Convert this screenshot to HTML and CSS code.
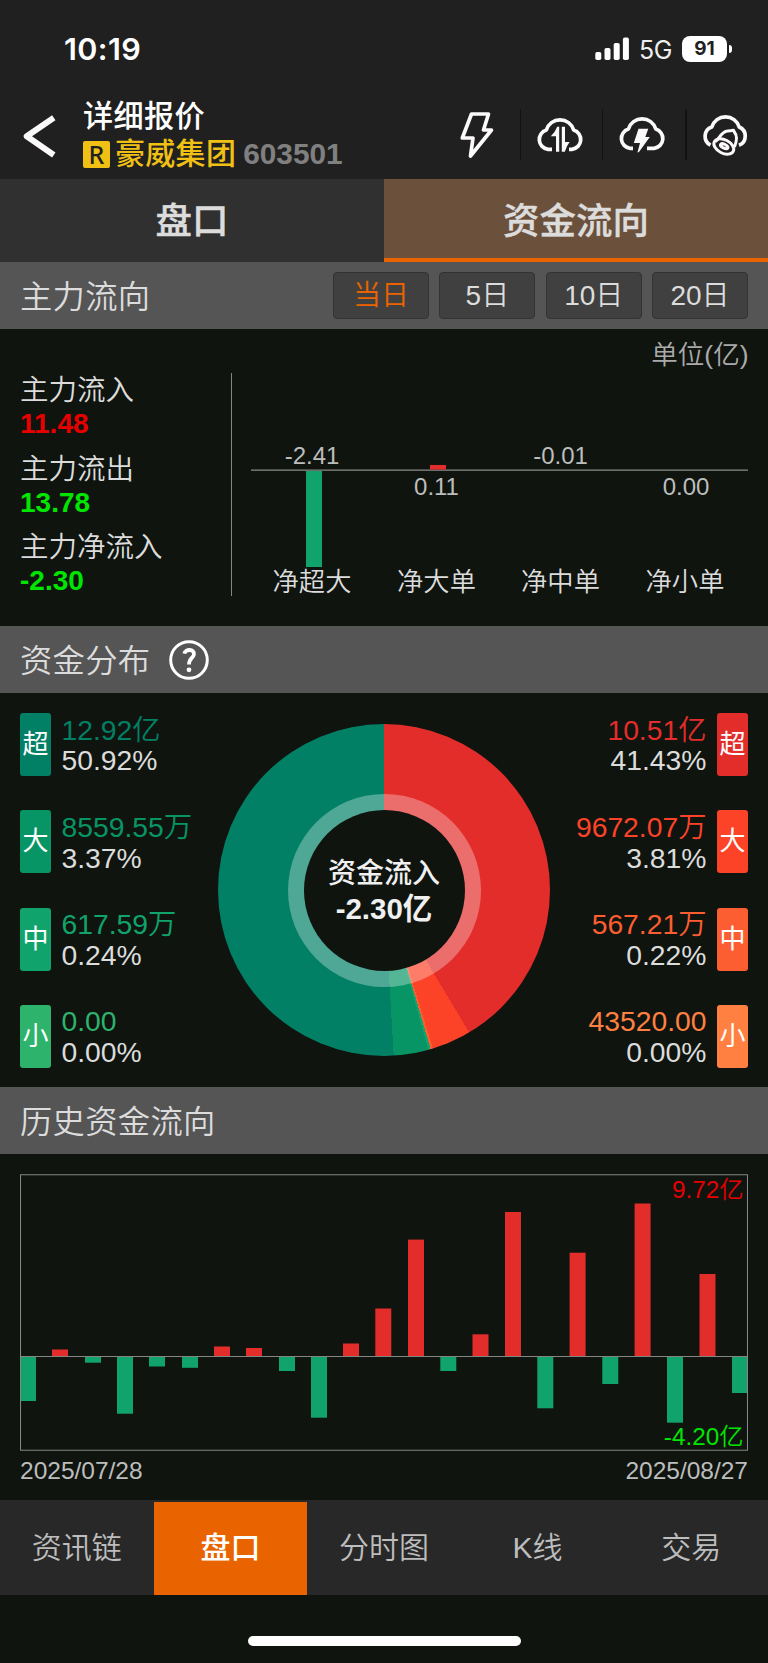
FILE: index.html
```html
<!DOCTYPE html>
<html lang="zh-CN">
<head>
<meta charset="utf-8">
<title>详细报价</title>
<link rel="stylesheet" href="styles.css">
</head>
<body>
<div class="status">
  <span class="clock">10:19</span>
  <svg class="signal" viewBox="0 0 35 24" width="35" height="24" fill="#fff"><rect x="0.3" y="15" width="6" height="8" rx="1.8"/><rect x="9.5" y="11" width="6" height="12" rx="1.8"/><rect x="18.7" y="6" width="6" height="17" rx="1.8"/><rect x="27.9" y="0.6" width="6" height="22.4" rx="1.8"/></svg>
  <span class="net">5G</span>
  <span class="battery">91</span>
  <span class="nub"></span>
</div>
<header class="header">
  <svg class="back" viewBox="20 112 36 48" width="36" height="48" fill="none" stroke="#fbf9fa" stroke-width="6" stroke-linecap="butt" stroke-linejoin="round"><path d="M53.8 117.800 26.7 136.3 53.8 155"/></svg>
  <div class="titles">
    <div class="title">详细报价</div>
    <div class="stock"><span class="margin-tag">R</span><span class="name">豪威集团</span><span class="code">603501</span></div>
  </div>
  <div class="tools">
    <svg class="tool" viewBox="438.5 108 82.5 51"><path d="M473 113H490L485 129H493L472 155 474.5 137H463.8Z"/></svg>
    <svg class="tool" viewBox="521 108 82.5 51"><path d="M553 148.300H549A9.900 9.900 0 0 1 547.300 129 14.300 14.300 0 0 1 574.700 129 9.900 9.900 0 0 1 573 148.300H570"/><path class="solid" d="M560.200 125.800V150.800H557V135.200H551.800Q556 131.500 558.200 125.800ZM562.800 125.800H566V141H570.600Q567.500 145 565.800 150.800H562.800Z"/></svg>
    <svg class="tool" viewBox="603.5 108 82.5 51"><path d="M634.500 147.300H631.600A9.900 9.900 0 0 1 629.900 128 14.300 14.300 0 0 1 657.300 128 9.900 9.900 0 0 1 655.600 147.300H648.500"/><path class="solid" d="M640 127.800H649.800L646.800 136H651.300L640.300 151.200H639L641.500 142H635.300Z"/></svg>
    <svg class="tool" viewBox="686 108 82.500 51"><path d="M711.500 144.200A9.900 9.900 0 0 1 712.800 126 14.300 14.300 0 0 1 740.200 126 9.900 9.900 0 0 1 740 144.300"/><ellipse class="fine" cx="724.800" cy="145.500" rx="10.600" ry="6.700" transform="rotate(27 724.800 145.500)"/><ellipse class="fine" cx="725.200" cy="145.200" rx="4" ry="1.900" transform="rotate(27 725.200 145.200)"/><path class="fine" d="M716.500 140.500C720.500 138 722 130.500 728.500 129.900 731 129.500 732.500 129.800 734.500 129.200L735.500 131.300C739 135.500 737.500 141 735.500 146"/></svg>
  </div>
</header>
<nav class="tabs"><div class="tab">盘口</div><div class="tab tab-on">资金流向</div></nav>

<div class="bar bar-first"><h2>主力流向</h2>
  <div class="periods"><button class="on">当日</button><button>5日</button><button>10日</button><button>20日</button></div>
</div>
<section class="flow">
  <div class="totals">
    <div class="total"><span>主力流入</span><b class="up">11.48</b></div>
    <div class="total"><span>主力流出</span><b class="down">13.78</b></div>
    <div class="total"><span>主力净流入</span><b class="down">-2.30</b></div>
  </div>
  <svg class="flow-chart" viewBox="232 329 536 296" width="536" height="296">
    <text class="unit" x="748.500" y="364" text-anchor="end">单位(亿)</text>
    <rect x="251" y="469.500" width="497" height="1.300" fill="#858585"/>
    <rect x="306" y="471" width="16" height="96" fill="#10a36c"/>
    <rect x="430" y="465" width="16" height="4.600" fill="#e32d2a"/>
    <g class="num" text-anchor="middle"><text x="312" y="463.500">-2.41</text><text x="436.500" y="494.500">0.11</text><text x="560.500" y="463.500">-0.01</text><text x="686" y="494.500">0.00</text></g>
    <g class="kind" text-anchor="middle"><text x="312" y="591">净超大</text><text x="436.500" y="591">净大单</text><text x="560.500" y="591">净中单</text><text x="685" y="591">净小单</text></g>
  </svg>
</section>

<div class="bar"><h2>资金分布</h2>
  <svg class="help" viewBox="0 0 40 40" width="40" height="40" fill="none" stroke="#fff"><circle cx="20" cy="20" r="18.300" stroke-width="3"/><path d="M15.300 13.700C16.300 8.500 25.600 8.800 24.900 14.500 24.400 18.300 20 18 20 24.500" stroke-width="3.800"/><circle cx="20" cy="29.800" r="2.400" fill="#fff" stroke="none"/></svg>
</div>
<section class="dist">
  <div class="side">
    <div class="item g1"><i>超</i><p><span>12.92亿</span><br>50.92%</p></div>
    <div class="item g2"><i>大</i><p><span>8559.55万</span><br>3.37%</p></div>
    <div class="item g3"><i>中</i><p><span>617.59万</span><br>0.24%</p></div>
    <div class="item g4"><i>小</i><p><span>0.00</span><br>0.00%</p></div>
  </div>
  <div class="donut"><div class="halo"><div class="hole"><span>资金流入</span><b>-2.30亿</b></div></div></div>
  <div class="side right">
    <div class="item r1"><i>超</i><p><span>10.51亿</span><br>41.43%</p></div>
    <div class="item r2"><i>大</i><p><span>9672.07万</span><br>3.81%</p></div>
    <div class="item r3"><i>中</i><p><span>567.21万</span><br>0.22%</p></div>
    <div class="item r4"><i>小</i><p><span>43520.00</span><br>0.00%</p></div>
  </div>
</section>

<div class="bar"><h2>历史资金流向</h2></div>
<section class="history">
  <svg viewBox="20 1174 728 277" width="728" height="277">
    <g fill="#e32d2a">
      <rect x="52" y="1349.500" width="16" height="7"/><rect x="214" y="1346.500" width="16" height="10"/><rect x="246" y="1348" width="16" height="8.500"/><rect x="343" y="1343.500" width="16" height="13"/><rect x="375.300" y="1308.500" width="16" height="48"/><rect x="408" y="1239.600" width="16" height="117"/><rect x="472.500" y="1334.300" width="16" height="22"/><rect x="505" y="1212" width="16" height="144.500"/><rect x="569.600" y="1252.700" width="16" height="104"/><rect x="634.600" y="1203.500" width="16" height="153"/><rect x="699.500" y="1274" width="16" height="82.500"/>
    </g>
    <g fill="#10a36c">
      <rect x="20" y="1357" width="16" height="44"/><rect x="85" y="1357" width="16" height="5.700"/><rect x="117" y="1357" width="16" height="56.700"/><rect x="149" y="1357" width="16" height="9.500"/><rect x="182" y="1357" width="16" height="10.800"/><rect x="279" y="1357" width="16" height="14"/><rect x="311" y="1357" width="16" height="60.700"/><rect x="440.300" y="1357" width="16" height="14"/><rect x="537.300" y="1357" width="16" height="51.300"/><rect x="602.300" y="1357" width="16" height="27"/><rect x="667" y="1357" width="16" height="65.700"/><rect x="732" y="1357" width="16" height="36"/>
    </g>
    <path d="M20 1356.500H748M20.500 1174.700H747.500V1450.300H20.500Z" fill="none" stroke="#858585" stroke-width="1.100"/>
    <text x="743.500" y="1197.500" text-anchor="end" fill="#e60000">9.72亿</text>
    <text x="743.500" y="1445" text-anchor="end" fill="#00e600">-4.20亿</text>
  </svg>
  <div class="dates"><span>2025/07/28</span><span>2025/08/27</span></div>
</section>
<nav class="bottom"><a>资讯链</a><a class="active">盘口</a><a>分时图</a><a>K线</a><a>交易</a></nav>
<div class="home"><span></span></div>
</body>
</html>
```
FILE: styles.css
```css
* { box-sizing: border-box; }
body { margin: 0; width: 768px; height: 1663px; overflow: hidden; background: #0f140f; color: #dcdcdc; font-family: "Liberation Sans", "Noto Sans CJK SC", sans-serif; }
svg { display: block; flex: none; }
.status { height: 98px; background: #202020; color: #fff; display: flex; align-items: flex-start; font-family: Inter, sans-serif; }
.clock { width: 530px; padding: 31px 0 0 64px; font-size: 30.500px; line-height: 36px; font-weight: 600; letter-spacing: .4px; }
.signal { margin: 37px 0 0 65px; }
.net { width: 43px; margin-left: 9px; padding-top: 35px; font-size: 25px; line-height: 30px; letter-spacing: -.5px; color: #eee; }
.battery { width: 45px; height: 26px; margin-top: 36px; border-radius: 8px; background: #fff; color: #202020; font-size: 19px; line-height: 26px; font-weight: 700; text-align: center; }
.nub { width: 3px; height: 8px; margin: 45px 0 0 2px; border-radius: 0 4px 4px 0; background: #fff; }
.header { height: 81px; background: #202020; display: flex; align-items: flex-start; }
.back { margin: 14px 0 0 20px; }
.titles { width: 354px; margin-left: 27px; }
.title { height: 37px; color: #fff; font-size: 30.200px; line-height: 37px; font-weight: 500; letter-spacing: .3px; }
.stock { display: flex; height: 38px; align-items: center; }
.margin-tag { width: 27px; height: 27px; border-radius: 2px; background: #f0c114; color: #202020; font: 500 25px/26px "Noto Sans", sans-serif; text-align: center; }
.name { margin-left: 5px; color: #f0c114; font-size: 30px; line-height: 38px; font-weight: 500; letter-spacing: .3px; }
.code { margin-left: 7px; color: #808080; font-size: 29.800px; line-height: 36px; font-weight: 700; }
.tools { display: flex; margin-top: 10.500px; }
.tool { width: 82.500px; height: 51px; fill: none; stroke: #fbf9fa; stroke-width: 3.700; stroke-linejoin: round; }
.tool + .tool { background: linear-gradient(90deg, #121212 1.500px, transparent 1.500px); }
.tool .solid { fill: #fbf9fa; stroke: none; }
.tool .fine { stroke-width: 3; }
.tabs { display: flex; height: 83px; }
.tab { width: 384px; padding-top: 2px; background: #303030; font-size: 36.500px; line-height: 82px; text-align: center; font-weight: 500; -webkit-text-stroke: .4px #dcdcdc; }
.tab-on { background: #6b503b; border-bottom: 4px solid #e96400; }
.bar { height: 67px; padding: 0 20px; background: #555; display: flex; align-items: center; }
.bar h2 { margin: 2px 0 0; color: #dcdcdc; font-size: 32.300px; line-height: 40px; font-weight: 350; letter-spacing: .3px; }
.periods { display: flex; gap: 10.300px; margin-left: auto; }
.periods button { width: 96px; height: 47px; padding: 0; border: 1px solid #333; border-radius: 4px; background: #404040; color: #dcdcdc; font: 350 28px/46px "Liberation Sans", "Noto Sans CJK SC", sans-serif; }
.periods .on { color: #e96400; }
.flow { height: 297px; display: flex; }
.totals { width: 232px; height: 223px; margin-top: 44px; padding-left: 20px; border-right: 1.500px solid #858585; }
.total { height: 78.500px; color: #dcdcdc; font-size: 28.500px; font-weight: 350; }
.total span { display: block; height: 34px; line-height: 34px; }
.total b { display: block; font-size: 28px; line-height: 34px; font-weight: 700; }
.up { color: #e60000; }
.down { color: #00e600; }
.unit { font-size: 26.500px; fill: #aaa; font-weight: 350; }
.num { font-size: 24px; fill: #bdbdbd; }
.kind { font-size: 26.300px; fill: #dcdcdc; font-weight: 350; }
.help { margin-left: 19px; }
.dist { height: 394px; padding: 20px 20px 0; display: flex; }
.side { width: 198px; display: flex; flex-direction: column; gap: 34.300px; }
.item { display: flex; height: 63px; gap: 10.500px; font-size: 28.300px; }
.item i { flex: none; width: 31px; height: 63px; border-radius: 3px; color: #fff; font-size: 26px; line-height: 63px; font-style: normal; text-align: center; }
.item p { margin: 1.500px 0 0; line-height: 30.700px; white-space: nowrap; font-weight: 350; }
.right .item { flex-direction: row-reverse; text-align: right; }
.g1 i { background: #018066; } .g1 span { color: #018066; }
.g2 i { background: #089565; } .g2 span { color: #089565; }
.g3 i { background: #10a36c; } .g3 span { color: #10a36c; }
.g4 i { background: #2db36b; } .g4 span { color: #2db36b; }
.r1 i { background: #e32d2a; } .r1 span { color: #e32d2a; }
.r2 i { background: #fc4328; } .r2 span { color: #fc4328; }
.r3 i { background: #fd5e31; } .r3 span { color: #fd5e31; }
.r4 i { background: #ff8040; } .r4 span { color: #ff8040; }
.donut { flex: none; width: 332px; height: 332px; margin-top: 11px; border-radius: 50%; background: conic-gradient(#e32d2a 41.430%, #fc4328 0 45.240%, #fd5e31 0 45.460%, #10a36c 0 45.700%, #089565 0 49.070%, #018066 0); display: grid; place-items: center; }
.halo { width: 193px; height: 193px; border-radius: 50%; background: rgba(255,255,255,.310); display: grid; place-items: center; }
.hole { width: 161px; height: 161px; border-radius: 50%; background: #0f140f; color: #f0f0f0; font-size: 28px; display: flex; flex-direction: column; align-items: center; padding-top: 46px; }
.hole span { height: 35px; line-height: 35px; font-weight: 500; }
.hole b { height: 35px; line-height: 35px; font-size: 29.500px; font-weight: 600; }
.history { height: 346px; padding: 20px 20px 0; font-size: 24.300px; font-weight: 350; }
.dates { display: flex; justify-content: space-between; height: 38px; color: #bdbdbd; font-size: 24.500px; line-height: 40px; }
.bottom { height: 95px; display: grid; grid-template-columns: repeat(5, 1fr); background: #282828; color: #bdbdbd; font-size: 30px; line-height: 95px; text-align: center; font-weight: 350; }
.bottom .active { height: 93px; margin-top: 2px; background: #e96400; color: #fff; line-height: 91px; font-weight: 500; }
.home { display: flex; justify-content: center; padding-top: 41px; }
.home span { width: 273px; height: 10px; border-radius: 5px; background: #fff; }
```
